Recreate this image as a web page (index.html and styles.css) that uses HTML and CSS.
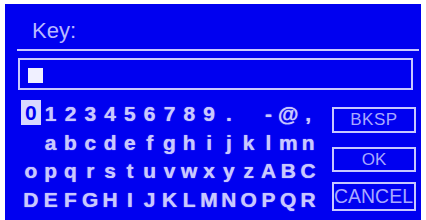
FILE: index.html
```html
<!DOCTYPE html>
<html lang="en">
<head>
  <meta charset="UTF-8" />
  <title>Key Entry</title>
  <link rel="stylesheet" href="styles.css">
</head>
<body>
  <div class="screen">
    <div class="title">Key:</div>
    <div class="rule"></div>
    <div class="field"><span class="cursor"></span></div>

    <div class="board">
      <div class="keys">
        <span class="key selected">0</span><span class="key">1</span><span class="key">2</span><span class="key">3</span><span class="key">4</span><span class="key">5</span><span class="key">6</span><span class="key">7</span><span class="key">8</span><span class="key">9</span><span class="key">.</span><span class="key"></span><span class="key">-</span><span class="key">@</span><span class="key">,</span>
        <span class="key"></span><span class="key">a</span><span class="key">b</span><span class="key">c</span><span class="key">d</span><span class="key">e</span><span class="key">f</span><span class="key">g</span><span class="key">h</span><span class="key">i</span><span class="key">j</span><span class="key">k</span><span class="key">l</span><span class="key">m</span><span class="key">n</span>
        <span class="key">o</span><span class="key">p</span><span class="key">q</span><span class="key">r</span><span class="key">s</span><span class="key">t</span><span class="key">u</span><span class="key">v</span><span class="key">w</span><span class="key">x</span><span class="key">y</span><span class="key">z</span><span class="key">A</span><span class="key">B</span><span class="key">C</span>
        <span class="key">D</span><span class="key">E</span><span class="key">F</span><span class="key">G</span><span class="key">H</span><span class="key">I</span><span class="key">J</span><span class="key">K</span><span class="key">L</span><span class="key">M</span><span class="key">N</span><span class="key">O</span><span class="key">P</span><span class="key">Q</span><span class="key">R</span>
      </div>

      <div class="buttons">
        <div class="btn bksp">BKSP</div>
        <div class="btn ok">OK</div>
        <div class="btn cancel"><span>CANCEL</span></div>
      </div>
    </div>
  </div>
</body>
</html>
```

FILE: styles.css
```css
* {
  box-sizing: border-box;
}

body {
  margin: 0;
  background-color: #ffffff;
  font-family: 'Liberation Sans', Arial, sans-serif;
}

.screen {
  margin: 4px 5px 0 5px;
  width: 416px;
  height: 216px;
  background-color: #0000f0;
  color: #c8c8ff;
  overflow: hidden;
}

.title {
  padding: 14px 0 0 27px;
  height: 45px;
  font-size: 22px;
  line-height: 26px;
  color: #b8b8ff;
}

.rule {
  height: 2px;
  margin: 0 2px 0 12px;
  background-color: #c8c8ff;
}

.field {
  height: 32px;
  margin: 7px 8px 0 13px;
  border: 2px solid #c8c8ff;
  padding: 8px 0 0 8px;
}

.cursor {
  display: block;
  width: 15px;
  height: 15px;
  background-color: #f0f0ff;
}

.board {
  display: flex;
  margin-top: 10px;
}

.keys {
  display: grid;
  grid-template-columns: repeat(15, 19.8px);
  grid-auto-rows: 28.5px;
  margin-left: 16px;
}

.key {
  display: flex;
  justify-content: center;
  align-items: center;
  font-weight: bold;
  font-size: 21px;
  color: #c8c8ff;
  text-shadow: 0 0 1px #c8c8ff;
}

.key.selected {
  background-color: #d8d8ff;
  color: #0000f0;
  text-shadow: none;
  height: 25px;
}

.buttons {
  display: flex;
  flex-direction: column;
  margin-left: 14px;
  width: 84px;
  padding-top: 7px;
}

.btn {
  display: flex;
  justify-content: center;
  align-items: center;
  border: 2px solid #c8c8ff;
  font-size: 17px;
  color: #a8a8ff;
}

.bksp {
  height: 26px;
  letter-spacing: 0.5px;
}

.ok {
  height: 25px;
  margin-top: 14px;
}

.cancel {
  height: 29px;
  margin-top: 10px;
}

.cancel span {
  display: inline-block;
  font-size: 18px;
  transform: scale(1.08, 1.1);
}
```
